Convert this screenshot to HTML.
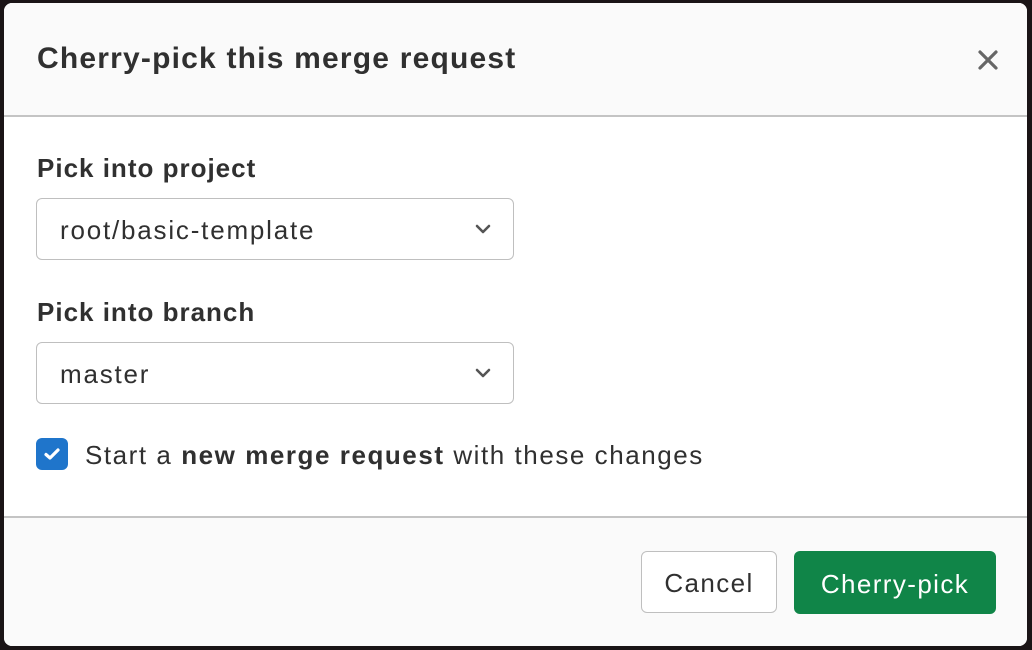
<!DOCTYPE html>
<html><head><style>
body{margin:0;width:1032px;height:650px;background:#1a1416;font-family:"Liberation Sans",sans-serif;color:#303030;position:relative;overflow:hidden}
.dlg{position:absolute;left:4px;top:3px;width:1023px;height:643px;background:#fff;border-radius:8px;overflow:hidden}
.hd{position:absolute;left:0;top:0;right:0;height:112px;background:#fafafa;border-bottom:2px solid #c4c4c4}
.hd h1{position:absolute;left:33px;top:39px;margin:0;font-size:30px;font-weight:bold;color:#303030;letter-spacing:1.2px}
.x{position:absolute;left:973px;top:46px}
.lbl{position:absolute;left:33px;font-size:26px;font-weight:bold;letter-spacing:1px}
.sel{position:absolute;left:32px;width:476px;height:60px;border:1.5px solid #bfbfbf;border-radius:6px;font-size:26px;letter-spacing:1.8px}
.sel span{position:absolute;left:23px;top:16px}
.sel svg{position:absolute;right:22px;top:24px}
.cb{position:absolute;left:32px;top:435px;width:32px;height:32px;background:#1f75cb;border-radius:6px}
.ct{position:absolute;left:81px;top:437px;font-size:26px;letter-spacing:1.55px}
.ft{position:absolute;left:0;right:0;top:513px;bottom:0;background:#fafafa;border-top:2px solid #c4c4c4}
.btn{position:absolute;top:548px;height:60px;border-radius:6px;font-size:26px;text-align:center;line-height:64px;letter-spacing:1.4px}
</style></head><body>
<div class="dlg">
 <div class="hd"><h1>Cherry-pick this merge request</h1>
  <svg class="x" width="22" height="22" viewBox="0 0 22 22"><path d="M3 3L19 19M19 3L3 19" stroke="#666" stroke-width="3.2" stroke-linecap="round"/></svg>
 </div>
 <div class="lbl" style="top:150px">Pick into project</div>
 <div class="sel" style="top:195px"><span>root/basic-template</span><svg width="16" height="12" viewBox="0 0 16 12"><path d="M2 3L8 9L14 3" fill="none" stroke="#555" stroke-width="2.6" stroke-linecap="round" stroke-linejoin="round"/></svg></div>
 <div class="lbl" style="top:294px">Pick into branch</div>
 <div class="sel" style="top:339px"><span>master</span><svg width="16" height="12" viewBox="0 0 16 12"><path d="M2 3L8 9L14 3" fill="none" stroke="#555" stroke-width="2.6" stroke-linecap="round" stroke-linejoin="round"/></svg></div>
 <div class="cb"><svg width="32" height="32" viewBox="0 0 32 32"><path d="M10 16.5L14 20L22 12" fill="none" stroke="#fff" stroke-width="3.2" stroke-linecap="round" stroke-linejoin="round"/></svg></div>
 <div class="ct">Start a <b>new merge request</b> with these changes</div>
 <div class="ft"></div>
 <div class="btn" style="left:637px;width:134px;background:#fff;border:1.5px solid #bfbfbf;line-height:62px">Cancel</div>
 <div class="btn" style="left:790px;width:202px;background:#108548;color:#fff;height:63px;line-height:66px">Cherry-pick</div>
</div>
</body></html>
